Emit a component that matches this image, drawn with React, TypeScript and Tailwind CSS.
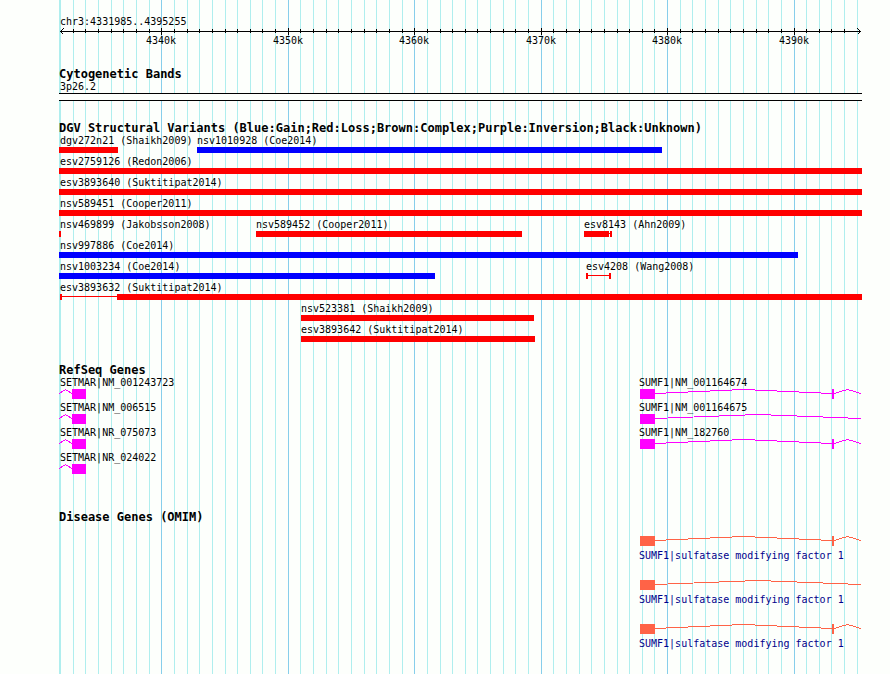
import type { ReactNode } from "react";

// The plot is 803 units wide; the scale itself covers units 1 to 801.
const PLOT = 803;
const START = 4331985;
const END = 4395255;

const pct = (units: number) => `${(units / PLOT) * 100}%`;
const toUnits = (bp: number) => 1 + Math.round(((bp - START) / (END - START)) * 800);

const ticks = Array.from({ length: 64 }, (_, i) => 4332000 + i * 1000).map((bp) => ({
  bp,
  left: toUnits(bp),
  x: toUnits(bp) + 0.5,
  major: bp % 10000 === 0,
}));

type Segment = { from: number; to: number };
type Variant = { label: string; color: string; segments: Segment[] };

const RED = "#ff0000";
const BLUE = "#0000ff";

const bar = (label: string, color: string, from: number, to: number): Variant => ({
  label,
  color,
  segments: [{ from, to }],
});

const variantLanes: Variant[][] = [
  [bar("dgv272n21 (Shaikh2009)", RED, 0, 59), bar("nsv1010928 (Coe2014)", BLUE, 138, 603)],
  [bar("esv2759126 (Redon2006)", RED, 0, 803)],
  [bar("esv3893640 (Suktitipat2014)", RED, 0, 803)],
  [bar("nsv589451 (Cooper2011)", RED, 0, 803)],
  [
    bar("nsv469899 (Jakobsson2008)", RED, 0, 2),
    bar("nsv589452 (Cooper2011)", RED, 197, 463),
    {
      label: "esv8143 (Ahn2009)",
      color: RED,
      segments: [
        { from: 525, to: 550 },
        { from: 551, to: 553 },
      ],
    },
  ],
  [bar("nsv997886 (Coe2014)", BLUE, 0, 739)],
  [
    bar("nsv1003234 (Coe2014)", BLUE, 0, 376),
    {
      label: "esv4208 (Wang2008)",
      color: RED,
      segments: [
        { from: 527, to: 529 },
        { from: 550, to: 552 },
      ],
    },
  ],
  [
    {
      label: "esv3893632 (Suktitipat2014)",
      color: RED,
      segments: [
        { from: 1, to: 3 },
        { from: 58, to: 803 },
      ],
    },
  ],
  [bar("nsv523381 (Shaikh2009)", RED, 242, 475)],
  [bar("esv3893642 (Suktitipat2014)", RED, 242, 476)],
];

type Gene = { label: string; at: number; boxes: [number, number][]; hats: [number, number][] };

const setmar = (label: string): Gene => ({ label, at: 1, boxes: [[13, 27]], hats: [[0, 13]] });
const sumfTwoExons = (label: string): Gene => ({
  label,
  at: 580,
  boxes: [
    [581, 596],
    [773, 775],
  ],
  hats: [
    [596, 773],
    [775, 802],
  ],
});
const sumfOneExon = (label: string): Gene => ({
  label,
  at: 580,
  boxes: [[581, 596]],
  hats: [[596, 802]],
});

const geneLanes: Gene[][] = [
  [setmar("SETMAR|NM_001243723"), sumfTwoExons("SUMF1|NM_001164674")],
  [setmar("SETMAR|NM_006515"), sumfOneExon("SUMF1|NM_001164675")],
  [setmar("SETMAR|NR_075073"), sumfTwoExons("SUMF1|NM_182760")],
  [setmar("SETMAR|NR_024022")],
];

const diseaseName = "SUMF1|sulfatase modifying factor 1";
const diseaseGenes: Gene[] = [
  sumfTwoExons(diseaseName),
  sumfOneExon(diseaseName),
  sumfTwoExons(diseaseName),
];

function Heading({ children }: { children: ReactNode }) {
  return <h2 className="h-[14px] whitespace-nowrap text-[12px] leading-[14px] font-bold">{children}</h2>;
}

function Labels({ items }: { items: { label: string; at: number }[] }) {
  return (
    <div className="grid h-[12px] grid-cols-1">
      {items.map((item) => (
        <span
          key={item.label}
          className="col-start-1 row-start-1 whitespace-nowrap"
          style={{ marginLeft: pct(item.at) }}
        >
          {item.label}
        </span>
      ))}
    </div>
  );
}

function GeneGlyphs({ genes, color }: { genes: Gene[]; color: string }) {
  return (
    <svg
      className="block h-[10px] w-full"
      viewBox={`0 0 ${PLOT} 10`}
      preserveAspectRatio="none"
      shapeRendering="crispEdges"
    >
      {genes.map((gene) => (
        <g key={gene.label} fill={color} stroke="none">
          {gene.hats.map(([a, b]) => (
            <polyline
              key={a}
              points={`${a},4.5 ${(a + b) / 2},0.5 ${b},4.5`}
              fill="none"
              stroke={color}
              vectorEffect="non-scaling-stroke"
            />
          ))}
          {gene.boxes.map(([a, b]) => (
            <rect key={a} x={a} y="0" width={b - a} height="10" />
          ))}
        </g>
      ))}
    </svg>
  );
}

function VariantLane({ variants }: { variants: Variant[] }) {
  return (
    <div>
      <Labels items={variants.map((v) => ({ label: v.label, at: Math.max(1, v.segments[0].from) }))} />
      <svg
        className="block h-[6px] w-full"
        viewBox={`0 0 ${PLOT} 6`}
        preserveAspectRatio="none"
        shapeRendering="crispEdges"
      >
        {variants.map((v) => {
          const first = v.segments[0].from;
          const last = v.segments[v.segments.length - 1].to;
          return (
            <g key={v.label} fill={v.color}>
              {v.segments.length > 1 && <rect x={first} y="2" width={last - first} height="1" />}
              {v.segments.map((s) => (
                <rect key={s.from} x={s.from} y="0" width={s.to - s.from} height="6" />
              ))}
            </g>
          );
        })}
      </svg>
    </div>
  );
}

function GridLines() {
  return (
    <svg
      className="absolute inset-0 h-full w-full"
      viewBox={`0 0 ${PLOT} 100`}
      preserveAspectRatio="none"
      shapeRendering="crispEdges"
      aria-hidden="true"
    >
      <line x1="0.5" x2="0.5" y1="0" y2="100" stroke="#afeeee" vectorEffect="non-scaling-stroke" />
      {ticks.map((t) => (
        <line
          key={t.bp}
          x1={t.x}
          x2={t.x}
          y1="0"
          y2="100"
          stroke={t.major ? "#87ceeb" : "#afeeee"}
          vectorEffect="non-scaling-stroke"
        />
      ))}
    </svg>
  );
}

function Scale() {
  return (
    <div>
      <div className="h-[12px] pl-px">chr3:4331985..4395255</div>
      <svg
        className="block h-[7px] w-full"
        viewBox={`0 0 ${PLOT} 7`}
        preserveAspectRatio="none"
        shapeRendering="crispEdges"
        fill="none"
        stroke="#000000"
      >
        <path d="M1 3.5H802" />
        <path d="M4.5 0.5L1.5 3.5L4.5 6.5M798.5 0.5L801.5 3.5L798.5 6.5" />
        {ticks.slice(1, -1).map((t) => (
          <path key={t.bp} d={t.major ? `M${t.x} 0V7` : `M${t.x} 1V5`} />
        ))}
      </svg>
      <div className="grid h-[12px] grid-cols-1">
        {ticks
          .filter((t) => t.major)
          .map((t) => (
            <span
              key={t.bp}
              className="col-start-1 row-start-1 flex w-0 justify-center"
              style={{ marginLeft: pct(t.left) }}
            >
              {t.bp / 1000}k
            </span>
          ))}
      </div>
    </div>
  );
}

export default function App() {
  return (
    <main className="min-h-screen overflow-hidden bg-[#fdfffc] pr-[28px] pl-[59px] font-['DejaVu_Sans_Mono','Liberation_Mono',monospace] text-[10px] leading-[12px] text-black">
      <div className="relative min-h-screen">
        <GridLines />
        <div className="relative flex flex-col gap-[20px] pt-[16px] pb-[24px]">
          <Scale />

          <section>
            <Heading>Cytogenetic Bands</Heading>
            <div className="h-[12px] pl-px">3p26.2</div>
            <div className="h-[8px] border-y border-black bg-[#fdfffc]" />
          </section>

          <section className="pb-px">
            <Heading>DGV Structural Variants (Blue:Gain;Red:Loss;Brown:Complex;Purple:Inversion;Black:Unknown)</Heading>
            <div className="flex flex-col gap-[3px]">
              {variantLanes.map((variants) => (
                <VariantLane key={variants[0].label} variants={variants} />
              ))}
            </div>
          </section>

          <section>
            <Heading>RefSeq Genes</Heading>
            <div className="flex flex-col gap-[3px]">
              {geneLanes.map((genes) => (
                <div key={genes[0].label}>
                  <Labels items={genes} />
                  <GeneGlyphs genes={genes} color="#ff00ff" />
                </div>
              ))}
            </div>
          </section>

          <section className="pt-[16px]">
            <Heading>Disease Genes (OMIM)</Heading>
            <div className="flex flex-col gap-[18px] pt-[12px] text-[#00008b]">
              {diseaseGenes.map((gene, i) => (
                <div key={i} className="flex flex-col gap-[4px]">
                  <GeneGlyphs genes={[gene]} color="#ff6347" />
                  <Labels items={[gene]} />
                </div>
              ))}
            </div>
          </section>
        </div>
      </div>
    </main>
  );
}
